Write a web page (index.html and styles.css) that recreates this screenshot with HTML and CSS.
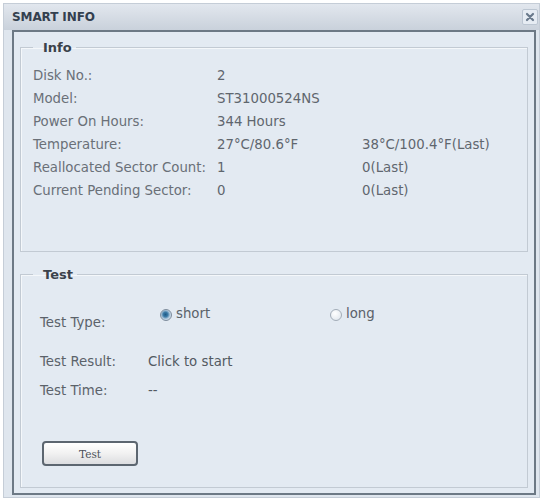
FILE: index.html
```html
<!DOCTYPE html>
<html>
<head>
<meta charset="utf-8">
<link rel="stylesheet" href="styles.css">
</head>
<body>
<div class="window">
  <div class="titlebar">
    <span class="title">SMART INFO</span>
    <span class="close"><svg width="12" height="12" viewBox="0 0 12 12"><path d="M3 3 L9 9 M9 3 L3 9" stroke="#6a7a8c" stroke-width="2.2" stroke-linecap="round"/></svg></span>
  </div>
  <div class="content">
    <fieldset class="box info">
      <legend>Info</legend>
      <div class="grid">
        <div class="lbl">Disk No.:</div><div class="val">2</div><div class="val"></div>
        <div class="lbl">Model:</div><div class="val">ST31000524NS</div><div class="val"></div>
        <div class="lbl">Power On Hours:</div><div class="val">344 Hours</div><div class="val"></div>
        <div class="lbl">Temperature:</div><div class="val">27°C/80.6°F</div><div class="val">38°C/100.4°F(Last)</div>
        <div class="lbl">Reallocated Sector Count:</div><div class="val">1</div><div class="val">0(Last)</div>
        <div class="lbl">Current Pending Sector:</div><div class="val">0</div><div class="val">0(Last)</div>
      </div>
    </fieldset>
    <fieldset class="box test">
      <legend>Test</legend>
      <div class="type-row">
        <div class="tlbl">Test Type:</div>
        <div class="radios">
          <label class="radio"><span class="dot on"></span>short</label>
          <label class="radio long"><span class="dot"></span>long</label>
        </div>
      </div>
      <div class="trow"><div class="tlbl">Test Result:</div><div class="tval">Click to start</div></div>
      <div class="trow"><div class="tlbl">Test Time:</div><div class="tval">--</div></div>
      <button class="btn">Test</button>
    </fieldset>
  </div>
</div>
</body>
</html>
```
FILE: styles.css
```css
html, body { margin: 0; padding: 0; background: #ffffff; }
body { font-family: "DejaVu Sans", Verdana, sans-serif; }
.window {
  margin: 3px;
  width: 535px;
  height: 493px;
  border: 1px solid #c5cdd7;
  background: #dfe6ee;
  display: flex;
  flex-direction: column;
}
.titlebar {
  height: 26px;
  flex: none;
  display: flex;
  align-items: center;
  justify-content: space-between;
  padding: 0 1px 0 8px;
  background: linear-gradient(#e2e7ee, #c9d1db);
}
.title {
  font-family: "DejaVu Sans", sans-serif;
  font-weight: bold;
  font-size: 12px;
  color: #33404f;
  letter-spacing: -0.1px;
}
.close {
  width: 14px; height: 14px;
  background: #e6ecf3;
  border: 1px solid #bcc6d2;
  border-radius: 2px;
  display: flex; align-items: center; justify-content: center;
}
.content {
  flex: 1;
  margin: 0 3px 2px 8px;
  border: 2px solid #6d7985;
  background: #e3eaf2;
  padding: 8px 6px 5px 6px;
  display: flex;
  flex-direction: column;
}
.box {
  margin: 0;
  border: 1px solid #c2cad3;
  box-shadow: inset 1px 1px 0 #f4f7fa;
  padding: 0;
}
.box legend {
  font-weight: bold;
  font-size: 13px;
  color: #3b424b;
  padding: 0 4px 0 10px;
}
.info { height: 201px; padding: 9px 12px 0 12px; }
.grid {
  display: grid;
  grid-template-columns: 184px 145px auto;
  grid-auto-rows: 23px;
  align-items: center;
  font-size: 13.3px;
  color: #6a7078;
}
.val { color: #5f666e; }
.test { flex: 1; margin-top: 15px; padding: 24px 18px 0 19px; font-size: 13.3px; color: #5b626a; }
.test legend { margin-left: -7px; }
.type-row { display: flex; height: 41px; }
.type-row .tlbl { width: 120px; padding-top: 9px; }
.radios { display: flex; }
.radio { display: flex; align-items: flex-start; width: 170px; }
.dot {
  width: 10px; height: 10px; border-radius: 50%;
  border: 1px solid #a3adb8;
  background: radial-gradient(circle at 40% 35%, #ffffff, #dbe2ea);
  margin: 3px 4px 0 0;
}
.dot.on {
  border-color: #7d8c9c;
  background: radial-gradient(circle at 45% 45%, #1e5a86 0, #3c7aa6 30%, #bcd0e2 60%, #e8eef4 100%);
}
.trow { display: flex; height: 29px; align-items: center; }
.trow .tlbl { width: 108px; }
.tval { color: #535a62; }
.btn {
  margin-top: 36px;
  margin-left: 2px;
  width: 96px; height: 25px;
  border: 2px solid #5c6670;
  border-radius: 4px;
  background: linear-gradient(#ffffff, #f1f1f1 50%, #dcdde0);
  font-family: "DejaVu Serif", serif;
  font-size: 10.5px;
  color: #4b5158;
  padding: 0;
}
```
